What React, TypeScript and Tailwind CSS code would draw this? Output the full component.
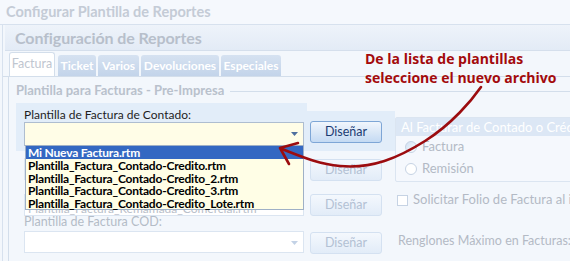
import React from 'react';

const plantillas = [
  'Mi Nueva Factura.rtm',
  'Plantilla_Factura_Contado-Credito.rtm',
  'Plantilla_Factura_Contado-Credito_2.rtm',
  'Plantilla_Factura_Contado-Credito_3.rtm',
  'Plantilla_Factura_Contado-Credito_Lote.rtm',
];

const tabs = [
  { label: 'Ticket', w: 'w-[38px]' },
  { label: 'Varios', w: 'w-[41px]' },
  { label: 'Devoluciones', w: 'w-[78px]' },
  { label: 'Especiales', w: 'w-[60px]' },
];

const Arrow = ({ light }: { light?: boolean }) => (
  <svg width="7" height="4" viewBox="0 0 7 4" className="absolute right-[5px] top-[9px]">
    <path d="M0 0H7L3.5 4Z" fill={light ? '#c3d2e6' : '#4f6f9f'} />
  </svg>
);

const DisenarButton = ({ disabled }: { disabled?: boolean }) => (
  <button
    className={
      disabled
        ? 'w-[72px] h-[22px] rounded-[3px] border border-[#d4e1f1] bg-gradient-to-b from-[#f4f8fd] to-[#e2ecf8] text-[12.5px] text-[#b3c1d4]'
        : 'w-[72px] h-[22px] rounded-[3px] border border-[#7ea6d6] bg-gradient-to-b from-[#f1f6fd] via-[#dbe8f7] to-[#c4daf3] text-[12.5px] text-[#1b3b72]'
    }
  >
    Diseñar
  </button>
);

const App: React.FC = () => {
  return (
    <div className="relative w-[570px] h-[261px] overflow-hidden bg-[#f3f7fc] font-['Lato',sans-serif] text-[12px]">
      {/* titulo ventana */}
      <div className="h-[25px] border-b border-[#d7e1ee] bg-[#f5f8fd] pl-[6px] flex items-center text-[14.5px] font-bold text-[#c4cbd6]">
        Configurar Plantilla de Reportes
      </div>

      <div className="ml-[2px] border-l border-[#d7e1ee] h-full">
        <div className="h-[26px] ml-[2px] border-b border-[#d5dfec] bg-gradient-to-b from-[#eef3fa] to-[#e3ebf6] pl-[10px] flex items-center text-[16px] font-bold text-[#b7bfcb] tracking-[-0.1px]">
          Configuración de Reportes
        </div>

        {/* tabs */}
        <div className="flex items-end gap-[2px] h-[26px] pl-[6px] border-b border-[#d3deeb]">
          <div className="h-[24px] w-[46px] mr-[1px] rounded-t-[3px] border border-b-0 border-[#d3deeb] bg-white text-[12.5px] text-[#bfc6d0] flex items-center justify-center">
            Factura
          </div>
          {tabs.map(t => (
            <div
              key={t.label}
              className={`${t.w} h-[21px] rounded-t-[3px] bg-gradient-to-b from-[#d6e2f1] to-[#c3d4ea] text-[12px] font-bold text-white flex items-center justify-center`}
            >
              {t.label}
            </div>
          ))}
        </div>

        {/* contenido */}
        <div className="ml-[5px] border-l border-[#d3deeb] h-full pl-[7px] pt-[6px]">
          <div className="flex items-center gap-[6px] h-[15px]">
            <span className="text-[13px] font-bold text-[#b9c1cc]">Plantilla para Facturas - Pre-Impresa</span>
            <div className="flex-1 border-t border-[#d3deeb] mt-[2px]" />
          </div>

          <div className="flex mt-[5px]">
            <div className="w-[386px]">
              {/* fila 1 */}
              <div className="flex items-start">
                <div className="w-[291px] h-[48px] bg-[#e2edf9] pl-[8px] pt-[5px]">
                  <div className="text-[12px] leading-[14px] text-[#1e1e1e]">Plantilla de Factura de Contado:</div>
                  <div className="relative w-[280px] h-[24px] border border-[#aebdd0] bg-[#fffde7]">
                    <Arrow />
                  </div>
                </div>
                <div className="w-[88px] h-[40px] mt-[8px] bg-[#e2edf9] pl-[3px] pt-[10px]">
                  <DisenarButton />
                </div>
              </div>

              {/* fila 2 */}
              <div className="flex items-start mt-[7px] pl-[8px]">
                <div className="relative w-[280px] h-[22px] border border-[#dbe5f1] bg-white">
                  <Arrow light />
                </div>
                <div className="ml-[6px] mt-[1px]">
                  <DisenarButton disabled />
                </div>
              </div>

              {/* fila 3 */}
              <div className="flex items-start mt-[13px] pl-[8px]">
                <div className="w-[280px] h-[22px] border border-[#dbe5f1] bg-white pl-[3px] pt-[4px] text-[12px] leading-[20px] text-[#b9c0ca] overflow-hidden whitespace-nowrap">
                  Plantilla_Factura_Remamada_Comercial.rtm
                </div>
                <div className="ml-[6px]">
                  <DisenarButton disabled />
                </div>
              </div>

              {/* fila 4 */}
              <div className="pl-[8px] -mt-[1px] text-[12.5px] leading-[14px] text-[#b4bcc7]">Plantilla de Factura COD:</div>
              <div className="flex items-start mt-[2px] pl-[8px]">
                <div className="relative w-[280px] h-[22px] border border-[#dbe5f1] bg-white">
                  <Arrow light />
                </div>
                <div className="ml-[6px] mt-[1px]">
                  <DisenarButton disabled />
                </div>
              </div>
            </div>

            {/* columna derecha */}
            <div className="flex-1 pt-[14px]">
              <div className="h-[65px] w-[200px] rounded-[2px] border border-[#dbe5f1] bg-[#f5f8fd]">
                <div className="h-[18px] bg-[#dce7f5] pl-[5px] text-[13px] leading-[18px] text-white whitespace-nowrap">
                  Al Facturar de Contado o Crédito
                </div>
                <div className="flex items-center h-[22px] pl-[9px] text-[13px] text-[#b3bac5]">
                  <span className="w-[12px] h-[12px] rounded-full border border-[#c6d3e4] bg-gradient-to-br from-[#cfe0f3] to-white mr-[5px]" />
                  Factura
                </div>
                <div className="flex items-center h-[22px] pl-[9px] text-[13px] text-[#b3bac5]">
                  <span className="w-[12px] h-[12px] rounded-full border border-[#c6d3e4] bg-white mr-[5px]" />
                  Remisión
                </div>
              </div>
              <div className="flex items-center h-[16px] mt-[10px] ml-[2px] text-[13px] text-[#b3bac5] whitespace-nowrap">
                <span className="w-[11px] h-[11px] border border-[#c6d3e4] bg-white mr-[5px]" />
                Solicitar Folio de Factura al imprimir
              </div>
              <div className="h-[16px] leading-[16px] mt-[25px] ml-[3px] text-[12.5px] text-[#b3bac5] whitespace-nowrap">
                Renglones Máximo en Facturas:
              </div>
            </div>
          </div>
        </div>
      </div>

      {/* lista desplegada */}
      <div className="absolute left-[25px] top-[145px] w-[279px] border border-[#9fb0c6] bg-[#fffee6]">
        {plantillas.map((p, i) => (
          <div
            key={p}
            className={
              i === 0
                ? 'h-[13px] pl-[2px] text-[12px] leading-[13px] tracking-[-0.2px] font-bold bg-[#3468c2] text-white'
                : 'h-[12.5px] pl-[2px] text-[12px] leading-[13px] tracking-[-0.2px] font-bold text-black'
            }
          >
            {p}
          </div>
        ))}
      </div>

      {/* anotacion */}
      <div className="absolute left-[365px] top-[49px] font-['Open_Sans',sans-serif] text-[14px] leading-[19px] font-bold text-[#a30a0c]">
        De la lista de plantillas
        <br />
        seleccione el nuevo archivo
      </div>
      <svg className="absolute left-0 top-0" width="570" height="261" viewBox="0 0 570 261" fill="none">
        <path
          d="M481 87 C472 100 452 124 425 141 C398 158 372 169 340 166 C318 164 300 156 282 149"
          stroke="#9c0c0f"
          strokeWidth="2.6"
          strokeLinecap="round"
        />
        <path d="M298 143 L280 148 L289 164" stroke="#9c0c0f" strokeWidth="2.6" strokeLinecap="round" strokeLinejoin="round" />
      </svg>
    </div>
  );
};

export default App;
